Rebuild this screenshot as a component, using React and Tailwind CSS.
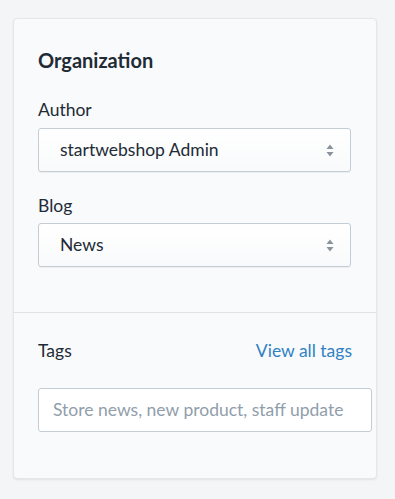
export default function App() {
  return (
    <div
      className="min-h-[499px] w-[395px] bg-[#f4f5f7] pt-[18px] pl-[13px] text-[#212b36]"
      style={{ fontFamily: 'Lato, "Open Sans", sans-serif' }}
    >
      <div className="w-[364px] h-[461px] rounded-[4px] bg-[#f9fafb] border border-[#e4e7ea] shadow-[0_1px_2px_rgba(0,0,0,0.08)]">
        <section className="px-[24px] pt-[29px] pb-[45px]">
          <h2 className="text-[20px] font-bold leading-[24px]">Organization</h2>

          <label className="block mt-[26px] text-[17.5px] leading-[24px]">Author</label>
          <div className="mt-[6px] w-[313px] h-[44px] rounded-[3px] border border-[#c4cdd5] bg-gradient-to-b from-white to-[#f9fafb] shadow-[0_1px_0_rgba(22,29,37,0.05)] flex items-center justify-between pl-[21px] pr-[16px]">
            <span className="text-[17.5px] leading-[24px]">startwebshop Admin</span>
            <Caret />
          </div>

          <label className="block mt-[22px] text-[17.5px] leading-[24px]">Blog</label>
          <div className="mt-[5px] w-[313px] h-[44px] rounded-[3px] border border-[#c4cdd5] bg-gradient-to-b from-white to-[#f9fafb] shadow-[0_1px_0_rgba(22,29,37,0.05)] flex items-center justify-between pl-[21px] pr-[16px]">
            <span className="text-[17.5px] leading-[24px]">News</span>
            <Caret />
          </div>
        </section>

        <div className="border-t border-[#dfe3e8]" />

        <section className="px-[24px] pt-[26px]">
          <div className="flex items-center justify-between w-[314px]">
            <span className="text-[17.5px] leading-[24px]">Tags</span>
            <span className="text-[17.5px] leading-[24px] text-[#2f82c3]">View all tags</span>
          </div>
          <div className="mt-[25px] w-[334px] h-[44px] rounded-[3px] border border-[#c4cdd5] bg-white flex items-center pl-[14px]">
            <span className="text-[17.5px] leading-[24px] text-[#919eab] whitespace-nowrap">
              Store news, new product, staff update
            </span>
          </div>
        </section>
      </div>
    </div>
  );
}

function Caret() {
  return (
    <svg width="8" height="13" viewBox="0 0 8 13" fill="#8a939c">
      <path d="M4 0.5 L7.5 5 H0.5 Z" />
      <path d="M4 12.5 L7.5 8 H0.5 Z" />
    </svg>
  );
}
